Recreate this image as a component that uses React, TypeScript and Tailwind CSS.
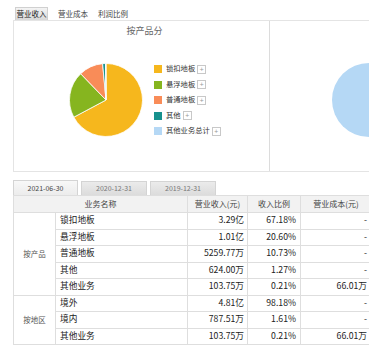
import React from "react";

const slices = [
  { v: 67.18, c: "#f6b71d" },
  { v: 20.6, c: "#86b51f" },
  { v: 10.73, c: "#f98c58" },
  { v: 1.27, c: "#17918d" },
  { v: 0.21, c: "#b5d8f5" },
];

function Pie() {
  const cx = 38, cy = 38, r = 36.5;
  let a = -Math.PI / 2;
  const total = slices.reduce((s, x) => s + x.v, 0);
  return (
    <svg width="76" height="76" viewBox="0 0 76 76">
      {slices.map((s, i) => {
        const da = (s.v / total) * Math.PI * 2;
        const x1 = cx + r * Math.cos(a), y1 = cy + r * Math.sin(a);
        const a2 = a + da;
        const x2 = cx + r * Math.cos(a2), y2 = cy + r * Math.sin(a2);
        const large = da > Math.PI ? 1 : 0;
        a = a2;
        return (
          <path
            key={i}
            d={`M${cx},${cy} L${x1},${y1} A${r},${r} 0 ${large} 1 ${x2},${y2} Z`}
            fill={s.c}
            stroke="#fff"
            strokeWidth="0.8"
          />
        );
      })}
    </svg>
  );
}

const legend = [
  { t: "锁扣地板", c: "#f6b71d" },
  { t: "悬浮地板", c: "#86b51f" },
  { t: "普通地板", c: "#f98c58" },
  { t: "其他", c: "#17918d" },
  { t: "其他业务总计", c: "#b5d8f5" },
];

const font = { fontFamily: '"Noto Sans CJK SC", "Noto Sans", sans-serif' };

type Row = { name: string; rev: string; ratio: string; cost: string };
const prod: Row[] = [
  { name: "锁扣地板", rev: "3.29亿", ratio: "67.18%", cost: "-" },
  { name: "悬浮地板", rev: "1.01亿", ratio: "20.60%", cost: "-" },
  { name: "普通地板", rev: "5259.77万", ratio: "10.73%", cost: "-" },
  { name: "其他", rev: "624.00万", ratio: "1.27%", cost: "-" },
  { name: "其他业务", rev: "103.75万", ratio: "0.21%", cost: "66.01万" },
];
const region: Row[] = [
  { name: "境外", rev: "4.81亿", ratio: "98.18%", cost: "-" },
  { name: "境内", rev: "787.51万", ratio: "1.61%", cost: "-" },
  { name: "其他业务", rev: "103.75万", ratio: "0.21%", cost: "66.01万" },
];

function Rows({ label, rows }: { label: string; rows: Row[] }) {
  return (
    <>
      {rows.map((r, i) => (
        <tr key={i} className="h-[16.5px]">
          {i === 0 && (
            <td rowSpan={rows.length} className="border border-[#dedede] text-center text-[7.5px] text-[#555]">
              {label}
            </td>
          )}
          <td className="border border-[#dedede] pl-[4px] text-left">{r.name}</td>
          <td className="border border-[#dedede] pr-[3px] text-right">{r.rev}</td>
          <td className="border border-[#dedede] pr-[4px] text-right">{r.ratio}</td>
          <td className="border border-[#dedede] pr-[4px] text-right">{r.cost}</td>
        </tr>
      ))}
    </>
  );
}

export default function App() {
  return (
    <div className="w-[369px] h-[351px] overflow-hidden bg-white text-[#333]" style={font}>
      <div className="w-[380px] pl-[13px]">
        {/* top tabs */}
        <div className="flex h-[20px] items-end gap-[10px] pl-[2px] text-[7.5px] leading-none">
          <div className="flex h-[13px] w-[33px] items-center justify-center border border-b-0 border-[#d0d0d0] bg-gradient-to-b from-[#f4f4f4] to-[#d8d8d8] text-[#222]">
            营业收入
          </div>
          <div className="flex h-[13px] items-center text-[#444]">营业成本</div>
          <div className="flex h-[13px] items-center text-[#444]">利润比例</div>
        </div>
        {/* chart panel */}
        <div className="flex h-[152px] border-t border-l border-b border-[#e4e4e4]">
          <div className="flex w-[263px] flex-col border-r border-[#dcdcdc]">
            <div className="pt-[4px] pl-[6px] text-center text-[9px] leading-[12px] text-[#666]">按产品分</div>
            <div className="mt-[25px] flex items-center pl-[54px]">
              <Pie />
              <div className="ml-[10px] flex flex-col gap-[6.5px]">
                {legend.map((l) => (
                  <div key={l.t} className="flex h-[9px] items-center text-[7.3px] leading-none text-[#333]">
                    <span className="mr-[4px] inline-block h-[8px] w-[8px]" style={{ background: l.c }} />
                    <span>{l.t}</span>
                    <span className="ml-[2px] flex h-[9px] w-[9px] items-center justify-center border border-[#c8c8c8] text-[7px] leading-none text-[#999]">
                      +
                    </span>
                  </div>
                ))}
              </div>
            </div>
          </div>
          <div className="flex-1">
            <svg width="110" height="150">
              <circle cx="99" cy="79" r="37" fill="#b5d8f5" />
            </svg>
          </div>
        </div>
        {/* date tabs */}
        <div className="mt-[8px] flex h-[15px] items-end gap-[3px] text-[7px] leading-none">
          <div className="flex h-[15px] w-[65px] items-center justify-center border border-b-0 border-[#d4d4d4] bg-gradient-to-b from-[#f8f8f8] to-[#ececec] text-[#444]">
            2021-06-30
          </div>
          <div className="flex h-[14px] w-[66px] items-center justify-center border border-b-0 border-[#d4d4d4] bg-gradient-to-b from-[#ebebeb] to-[#dcdcdc] text-[#777]">
            2020-12-31
          </div>
          <div className="flex h-[14px] w-[66px] items-center justify-center border border-b-0 border-[#d4d4d4] bg-gradient-to-b from-[#ebebeb] to-[#dcdcdc] text-[#777]">
            2019-12-31
          </div>
        </div>
        <table className="w-[358px] table-fixed border-collapse text-[8.7px] leading-none text-[#222]">
          <colgroup>
            <col className="w-[42px]" />
            <col className="w-[132px]" />
            <col className="w-[60px]" />
            <col className="w-[53px]" />
            <col className="w-[71px]" />
          </colgroup>
          <thead>
            <tr className="h-[17px] bg-[#f2f2f2] text-[8px] font-normal text-[#444]">
              <th colSpan={2} className="border border-[#dedede] font-normal">业务名称</th>
              <th className="border border-[#dedede] font-normal">营业收入(元)</th>
              <th className="border border-[#dedede] font-normal">收入比例</th>
              <th className="border border-[#dedede] font-normal">营业成本(元)</th>
            </tr>
          </thead>
          <tbody>
            <Rows label="按产品" rows={prod} />
            <Rows label="按地区" rows={region} />
          </tbody>
        </table>
      </div>
    </div>
  );
}
